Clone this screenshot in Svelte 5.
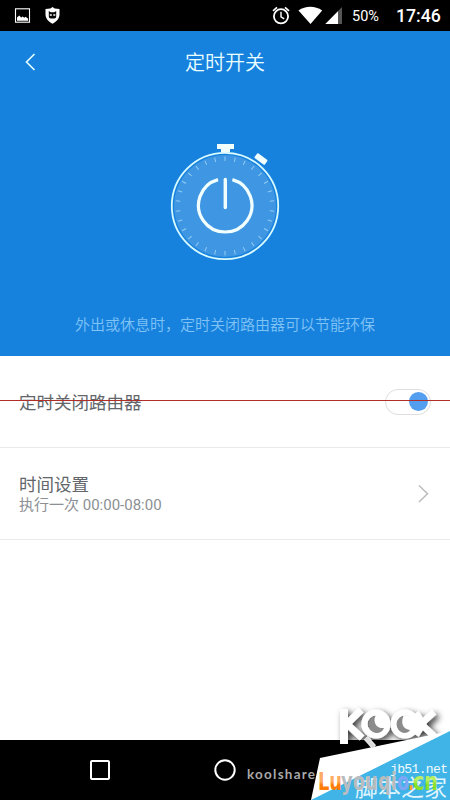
<script>
  const cx = 65, cy = 71;
  const ticks = Array.from({ length: 30 }, (_, i) => i * 12);
</script>

<div class="screen">
  <header class="status">
    <svg class="notif" width="60" height="31" viewBox="0 0 60 31">
      <rect x="15.5" y="8.8" width="14" height="13.4" fill="none" stroke="#fff" stroke-width="1.1" />
      <path d="M17 20.8v-3.2l2.2-2 2 2 1.6-1.2 1.4 1.4 1.4-1 2.5 2v2z" fill="#fff" />
      <path d="M52.5 7l2.2 1.4 4.8.6v5.5c0 4-3.2 7.3-7 9.3-3.8-2-7-5.3-7-9.3V9l4.8-.6z" fill="#fff" />
      <path d="M48.8 11l2 1.3h3.4l2-1.3v5.5q0 2-2 2h-3.4q-2 0-2-2z" fill="#080808" />
      <path d="M49.8 15h2M53.3 15h2" stroke="#fff" stroke-width="1.3" />
    </svg>
    <div class="right">
      <svg width="82" height="31" viewBox="270 0 82 31">
        <g fill="none" stroke="#fff">
          <circle cx="281" cy="16.3" r="7.1" stroke-width="1.8" />
          <path d="M281 11.8v5l3.2 2" stroke-width="1.4" />
          <path d="M273 10.8l4-3.4M289 10.8l-4-3.4" stroke-width="1.7" />
        </g>
        <path d="M298.5 10.4c7-5 16.5-5 23.7 0L310.5 24z" fill="#fff" />
        <path d="M342 7v17h-16.5z" fill="#555" />
        <path d="M338 11.3v12.7h-12.7z" fill="#fff" />
      </svg>
      <span class="battery">50%</span>
      <span class="clock">17:46</span>
    </div>
  </header>

  <section class="hero">
    <div class="title">
      <svg width="20" height="24" viewBox="0 0 20 24"><path d="M14.5 4L6.5 12l8 8" fill="none" stroke="#e4ffff" stroke-width="1.6" /></svg>
      <h1>定时开关</h1>
    </div>
    <svg class="watch" width="130" height="130" viewBox="0 0 130 130">
      <circle {cx} {cy} r="53.2" fill="#1782de" stroke="#d8fbff" stroke-width="1.8" />
      <circle {cx} {cy} r="51" fill="#3f96e3" />
      {#each ticks as angle}
        <path d="M65 21.5v4.5" stroke="#91ccf3" stroke-width="1" transform="rotate({angle} {cx} {cy})" />
      {/each}
      <path d="M57 9h17v5h-4v3.5h-9V14h-4z" fill="#f2ffff" />
      <rect x="-6.3" y="-3" width="12.6" height="6" rx="1" fill="#f2ffff" transform="translate(101 24) rotate(37)" />
      <path d="M58 44.6a26.7 26.7 0 1 0 14.4 0" fill="none" stroke="#f1ffff" stroke-width="3.2" />
      <path d="M65.3 44.5v28" stroke="#f1ffff" stroke-width="3.4" stroke-linecap="round" />
    </svg>
    <p>外出或休息时，定时关闭路由器可以节能环保</p>
  </section>

  <main>
    <div class="row">
      <span>定时关闭路由器</span>
      <div class="toggle"><i></i></div>
    </div>
    <div class="row">
      <div class="labels">
        <span>时间设置</span>
        <small>执行一次 00:00-08:00</small>
      </div>
      <svg width="20" height="24" viewBox="0 0 20 24"><path d="M6 3.5l8.5 8.2L6 20" fill="none" stroke="#bcbcbc" stroke-width="1.5" /></svg>
    </div>
  </main>

  <footer>
    <svg width="450" height="60" viewBox="0 740 450 60">
      <rect x="91" y="761" width="18" height="18" rx="1" fill="none" stroke="#fff" stroke-width="2" />
      <circle cx="225" cy="770" r="9.7" fill="none" stroke="#fff" stroke-width="2" />
    </svg>
  </footer>

  <div class="strike"></div>

  <svg class="watermark" width="210" height="100" viewBox="240 700 210 100">
    <defs>
      <filter id="shadow" x="-20%" y="-20%" width="150%" height="150%">
        <feDropShadow dx="3" dy="3" stdDeviation="3" flood-color="#000" flood-opacity=".8" />
      </filter>
      <linearGradient id="orange" x1="0" y1="770" x2="0" y2="791" gradientUnits="userSpaceOnUse">
        <stop offset=".55" stop-color="#ffac62" /><stop offset=".7" stop-color="#ff7d08" />
      </linearGradient>
      <linearGradient id="green" x1="0" y1="770" x2="0" y2="791" gradientUnits="userSpaceOnUse">
        <stop offset=".45" stop-color="#baf060" /><stop offset=".7" stop-color="#8be02a" />
      </linearGradient>
    </defs>
    <g filter="url(#shadow)" fill="none" stroke="#fff">
      <path d="M344 709v35" stroke-width="8" />
      <path d="M361 710l-14 14 15 14" stroke-width="7" />
      <circle cx="376" cy="724" r="11.5" stroke-width="6" />
      <circle cx="405" cy="724" r="11.5" stroke-width="6" />
      <path d="M434 712l-13 12 13 12M416 713l7 11-7 11" stroke-width="6.5" />
      <path d="M366 738l8 9" stroke-width="5" />
    </g>
    <g fill="#8b8b8b">
      <path d="M376 716c-9 1-10 15 0 17 4 0 7-2 8-5-8 1-11-6-8-12z" />
      <path d="M404 716c-9 1-10 15 0 17 3 0 5-1 6-3-8-1-10-8-6-14z" />
    </g>
    <g fill="#fff">
      <path d="M376 715c-4 6 0 14 9 13v-6l-4-6z" />
      <path d="M404 715c-4 7-1 14 7 15l4-5-3-8z" />
    </g>
    <path d="M320 758L450 731v69H311z" fill="#fff" />
    <path d="M366 738l8 9" stroke="#ddd" stroke-width="4" />
    <path d="M311 800L450 731v69z" fill="#40b4e7" />
    <text x="247" y="779" class="kool" textLength="68">koolshare</text>
    <text x="390" y="773" class="jb" textLength="58">jb51.net</text>
    <text x="355" y="796" class="home" textLength="92">脚本之家</text>
    <g class="lu">
      <text x="318" y="790" fill="url(#orange)" textLength="24" lengthAdjust="spacingAndGlyphs">Lu</text>
      <text x="341" y="790" fill="#b9bcbf" textLength="56" lengthAdjust="spacingAndGlyphs">youqi</text>
      <text x="397" y="790" fill="#7fa6f4" textLength="12" lengthAdjust="spacingAndGlyphs">o</text>
      <text x="408" y="790" fill="#ffa02c" textLength="6" lengthAdjust="spacingAndGlyphs">.</text>
      <text x="413" y="790" fill="url(#green)" textLength="25" lengthAdjust="spacingAndGlyphs">cn</text>
    </g>
  </svg>
</div>

<style>
  :global(body) { margin: 0; }
  .screen { position: relative; width: 450px; height: 800px; overflow: hidden; display: flex; flex-direction: column; background: #fff; font-family: Roboto, "Noto Sans CJK SC", sans-serif; }
  .status { height: 31px; background: #000; color: #fff; display: flex; justify-content: space-between; flex: none; }
  .right { display: flex; align-items: center; height: 31px; width: 180px; }
  .battery { font-size: 14.5px; width: 44px; line-height: 31px; padding-top: 2px; }
  .clock { font-size: 17.7px; font-weight: 500; line-height: 31px; padding-top: 1px; }
  .hero { height: 325px; background: #1782de; display: flex; flex-direction: column; align-items: center; flex: none; }
  .title { width: 100%; height: 62px; display: flex; align-items: center; box-sizing: border-box; padding-left: 20px; }
  h1 { margin: 0; flex: 1; padding: 0 40px 1px 0; text-align: center; font-size: 20px; font-weight: 350; color: #eaffff; }
  .watch { margin-top: 42px; flex: none; }
  p { margin: 49px 0 0; font-size: 15px; line-height: 22px; font-weight: 350; color: #80c3f5; }
  main { height: 384px; flex: none; }
  .row { height: 92px; display: flex; align-items: center; justify-content: space-between; padding: 0 19px; border-bottom: 1px solid #e9e9e9; box-sizing: border-box; color: #62666a; font-size: 17.5px; }
  .labels { display: flex; flex-direction: column; }
  .labels span { line-height: 22px; }
  .row svg { margin-right: -2px; }
  small { font-size: 15px; line-height: 18px; color: #8c9094; }
  .toggle { box-sizing: border-box; width: 46px; height: 26px; border: 1px solid #dedede; border-radius: 13px; display: flex; align-items: center; justify-content: flex-end; padding-right: 2px; }
  .toggle i { width: 19px; height: 19px; border-radius: 50%; background: #539eee; }
  footer { height: 60px; background: #000; flex: none; }
  .strike { position: absolute; left: 0; top: 400px; width: 450px; height: 1px; background: #b12d27; }
  .watermark { position: absolute; right: 0; bottom: 0; }
  .kool { font: bold 13.5px Lato, sans-serif; fill: #a8a8a8; }
  .jb { font: 13px "Liberation Mono", monospace; fill: #f0fbff; }
  .home { font: 23px "Noto Sans CJK SC", sans-serif; fill: #e2f6ff; }
  .lu { font: bold 25px "DejaVu Sans", sans-serif; }
</style>
